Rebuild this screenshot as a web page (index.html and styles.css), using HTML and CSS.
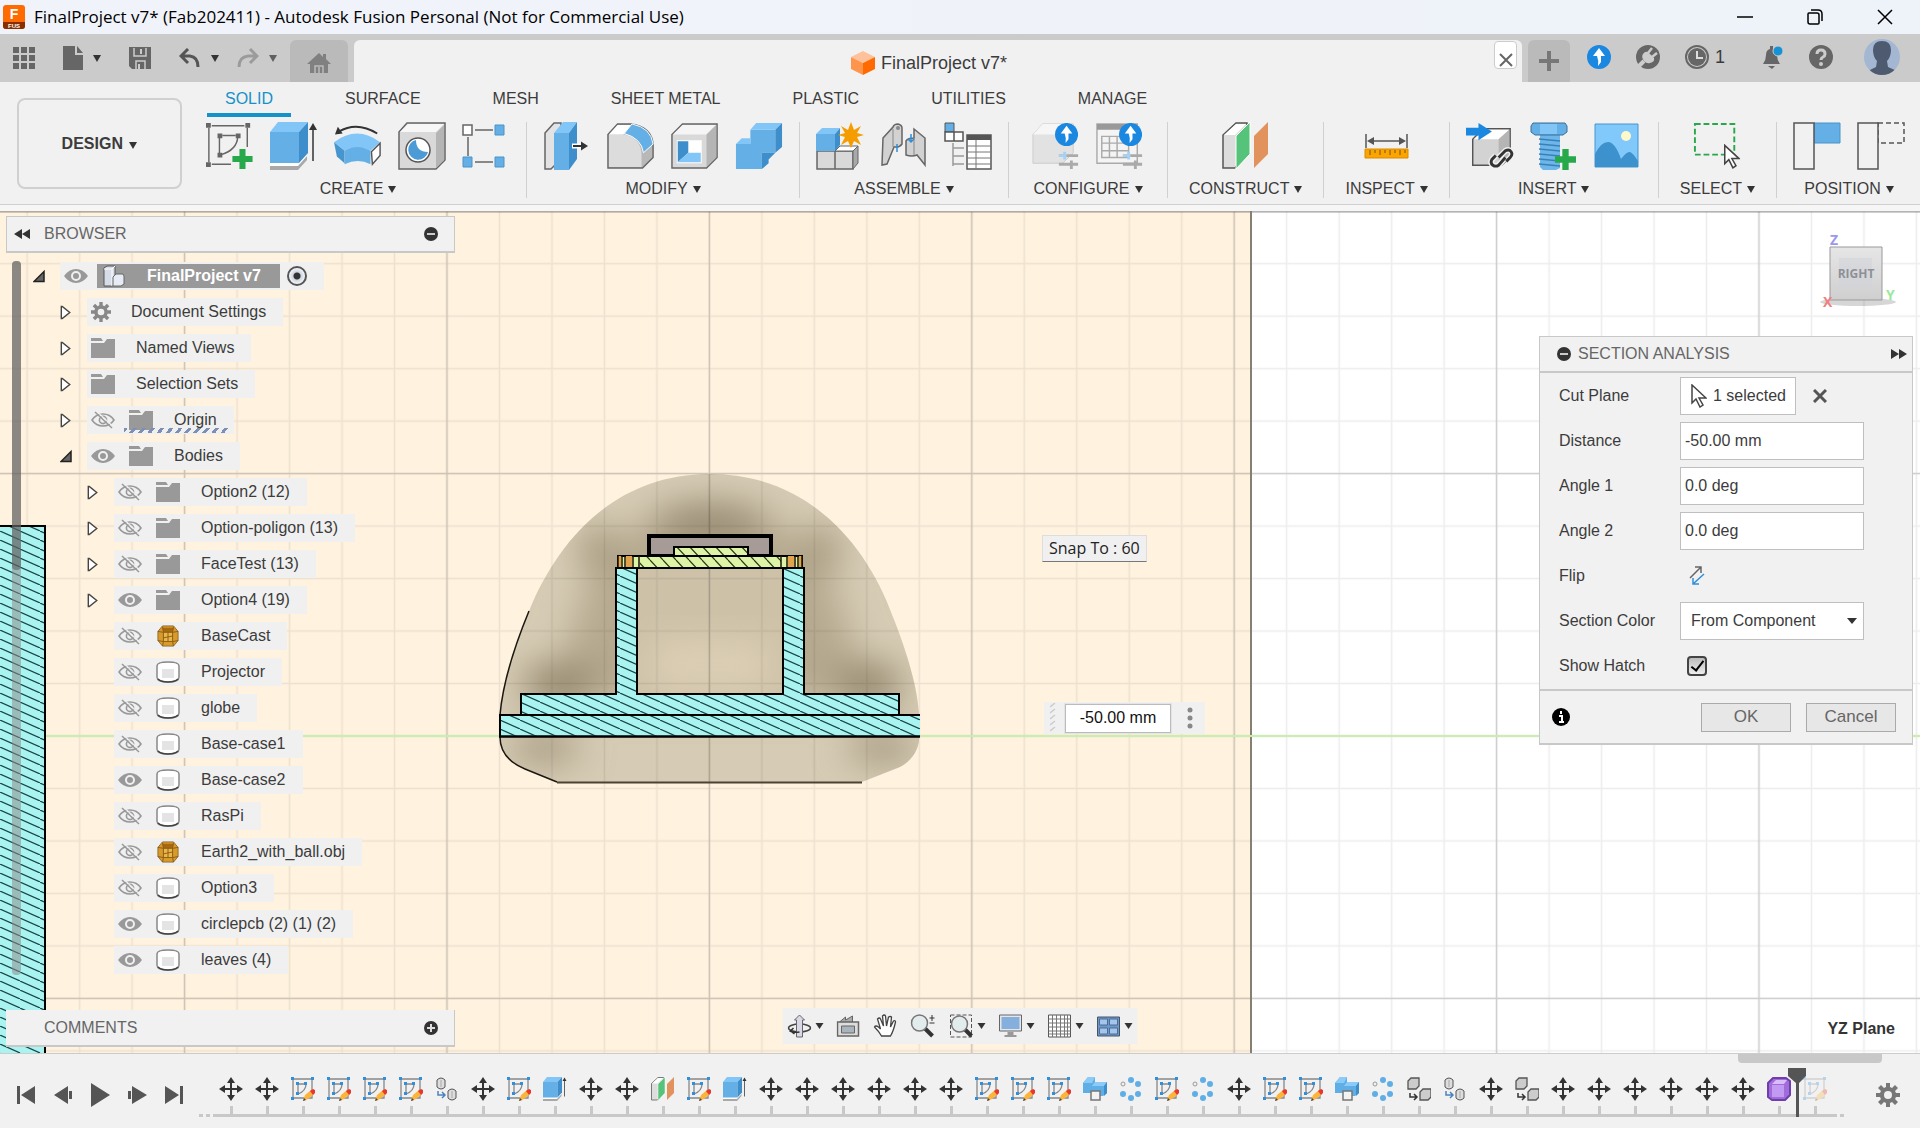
FILE: index.html
```html
<!doctype html>
<html lang="en">
  <head>
    <meta charset="utf-8">
    <title>FinalProject v7* (Fab202411) - Autodesk Fusion Personal</title>
    <link rel="stylesheet" href="styles.css">
  </head>
  <body>
    <!-- shared icons -->
    <svg class="defs" aria-hidden="true">
      <defs>
        <symbol id="eye" viewBox="0 0 24 18">
          <path d="M0 9Q5 2 12 2T24 9Q19 16 12 16T0 9z" fill="#999"/>
          <circle cx="12" cy="9" r="4" fill="#999" stroke="#f0f0f0" stroke-width="2"/>
        </symbol>
        <symbol id="eye-off" viewBox="0 0 24 18">
          <g fill="none" stroke="#999" stroke-width="1.6">
            <path d="M1 9Q5 3 12 3T23 9Q19 15 12 15T1 9z"/>
            <circle cx="12" cy="9" r="3.6"/>
            <path d="M4 1l17 16"/>
          </g>
          <path d="M5.500 0l17 16" stroke="#f0f0f0" stroke-width="1.200"/>
        </symbol>
        <symbol id="folder" viewBox="0 0 24 20">
          <path d="M0 0h10l2 3H0zM0 5h13l3-4h8v19H0z" fill="#999"/>
        </symbol>
        <symbol id="gear" viewBox="0 0 24 24">
          <path d="M10 0h4v4l2 1 3-3 3 3-3 3 1 2h4v4h-4l-1 2 3 3-3 3-3-3-2 1v4h-4v-4l-2-1-3 3-3-3 3-3-1-2H0v-4h4l1-2-3-3 3-3 3 3 2-1zM12 8a4 4 0 1 0 0 8 4 4 0 0 0 0-8z" fill="currentColor" fill-rule="evenodd"/>
        </symbol>
        <symbol id="solid" viewBox="0 0 24 22">
          <path d="M1 5Q1 1 12 1T23 5V16Q23 21 12 21T1 16z" fill="#fff" stroke="#888" stroke-width="1.500"/>
          <path d="M6 8h12v9H6z" fill="#e4e4e4"/>
          <path d="M2 4Q5 8 12 8T22 4Q20 2 12 2T2 4z" fill="#fff"/>
          <path d="M2 18q3 3 10 3t10-3" fill="none" stroke="#444" stroke-width="1.500"/>
        </symbol>
        <symbol id="mesh" viewBox="0 0 24 24">
          <path d="M6 1h12l5 6v10l-5 6H6l-5-6V7z" fill="#d79a2b" stroke="#8a6a35"/>
          <path d="M6 3h12l-1 5H7z" fill="#a8680f"/>
          <path d="M7 8h10v10H7z" fill="#e8b64a"/>
          <path d="M7 8L6 2M17 8l1-6M7 8L1 7M17 8l6-1M7 18l-1 5M17 18l1 5M7 18l-6-1M17 18l6-1M7 8h10v10H7zM7 14l10-2M12 8v10" fill="none" stroke="#8a5a10"/>
        </symbol>
        <symbol id="closed" viewBox="0 0 12 16">
          <path d="M1 1.500L2 1.500 10 8 2 14.500H1z" fill="#fff" stroke="#444" stroke-width="1.500"/>
        </symbol>
        <symbol id="open" viewBox="0 0 12 12">
          <path d="M11 1v10H1z" fill="#666" stroke="#222" stroke-width="1.500"/>
        </symbol>
        <symbol id="minus" viewBox="0 0 14 14">
          <circle cx="7" cy="7" r="7" fill="#333"/>
          <path d="M3 7h8" stroke="#ccc" stroke-width="2"/>
        </symbol>
        <symbol id="rewind" viewBox="0 0 16 10">
          <path d="M8 0v10L0 5zM16 0v10L8 5z" fill="#333"/>
        </symbol>

        <symbol id="cube-up" viewBox="0 0 24 24">
          <circle cx="12" cy="12" r="12" fill="#1a87e0"/>
          <path d="M12 3l6 8h-4v6l-3 4q1-5-1-10H6z" fill="#fff"/>
        </symbol>
        <symbol id="plus" viewBox="0 0 20 20">
          <path d="M7 0h6v7h7v6h-7v7H7v-7H0V7h7z" fill="#27a84a"/>
        </symbol>
        <symbol id="arrow-cursor" viewBox="0 0 16 24">
          <path d="M1 1v18l4-4 4 8 3-2-4-7h7z" fill="#fff" stroke="#444" stroke-width="1.500"/>
        </symbol>

        <symbol id="r-sketch" viewBox="0 0 50 48">
          <path d="M3 5v36M6 3h34M43 5v20M6 43h20M14 15v17M17 13h14M33 15q-1 13-17 18" fill="none" stroke="#666" stroke-width="1.500"/>
          <path d="M0 0h5v5H0zM41 0h5v5h-5zM0 41h5v5H0zM12 11h5v5h-5zM31 11h5v5h-5zM12 31h5v5h-5z" fill="#666"/>
          <use href="#plus" x="27" y="27" width="22" height="21"/>
        </symbol>
        <symbol id="extrude" viewBox="0 0 48 48">
          <path d="M0 42h28l9-9v5l-9 10H0z" fill="#a9a9a9"/>
          <path d="M0 40h28l9-9v3l-9 10H0z" fill="#fff"/>
          <path d="M0 10h29v31H0z" fill="#64afe5"/>
          <path d="M0 10L8 0h30l-9 10z" fill="#82c6f8"/>
          <path d="M29 10l9-10v31l-9 10z" fill="#3d8ecb"/>
          <path d="M43 39V6" stroke="#333" stroke-width="1.500"/>
          <path d="M43 1l4 7h-8z" fill="#333"/>
        </symbol>
        <symbol id="r-revolve" viewBox="0 0 50 48">
          <path d="M0 20Q24 2 48 20L38 29Q24 22 11 29z" fill="#82c6f8"/>
          <path d="M0 20l11 9v13L3 35z" fill="#4795cf"/>
          <path d="M11 29q13-8 27 0v14q-13-7-27 0z" fill="#64afe5"/>
          <path d="M39 30l9-9v13l-8 9z" fill="#fff" stroke="#555" stroke-width="1.500"/>
          <path d="M5 9Q24-2 45 11" fill="none" stroke="#333" stroke-width="2"/>
          <path d="M1 12L4 4l5 7z" fill="#333"/>
        </symbol>
        <symbol id="r-hole" viewBox="0 0 48 48">
          <path d="M1 10L9 1h38v37l-9 9H1z" fill="#d9d9d9" stroke="#666" stroke-width="1.500"/>
          <path d="M2 10l8-8h36l-8 8z" fill="#f7f7f7"/>
          <path d="M38 11l8-8v35l-8 8z" fill="#b5b5b5"/>
          <circle cx="20" cy="28" r="12" fill="#fff" stroke="#555" stroke-width="1.500"/>
          <path d="M18 18a10 10 0 1 0 12 12Q18 30 18 18z" fill="#4d9bd6"/>
        </symbol>
        <symbol id="r-pattern" viewBox="0 0 48 48">
          <path d="M13 8h18M6 15v19M13 40h18" stroke="#666" stroke-width="1.500"/>
          <path d="M1 3h9v10H1z" fill="#fff" stroke="#666" stroke-width="1.500"/>
          <path d="M33 3h9v10h-9zM1 35h9v10H1zM33 35h9v10h-9z" fill="#64afe5" stroke="#4b93c9"/>
        </symbol>
        <symbol id="r-press" viewBox="0 0 48 48">
          <path d="M2 11l9-10h7v36L8 47H2z" fill="#e3e3e3" stroke="#666" stroke-width="1.500"/>
          <path d="M11 11h15v37H11z" fill="#64afe5"/>
          <path d="M11 11L20 0h14l-8 11z" fill="#82c6f8"/>
          <path d="M26 11l8-11v37l-8 11z" fill="#3d8ecb"/>
          <path d="M29 24h10" stroke="#fff" stroke-width="5"/>
          <path d="M30 24h9" stroke="#333" stroke-width="2"/>
          <path d="M38 19.500l7 4.500-7 4.500z" fill="#333"/>
        </symbol>
        <symbol id="r-fillet" viewBox="0 0 50 48">
          <path d="M1 12L11 1h14q22 3 23 22v13L37 47H1z" fill="#b8b8b8" stroke="#666" stroke-width="1.500"/>
          <path d="M2 12h16q18 4 18 22v12H2z" fill="#dcdcdc"/>
          <path d="M2 12l9-10h14l-8 10z" fill="#fff"/>
          <path d="M18 11l8-10q20 4 22 21l-10 9Q36 16 18 11z" fill="#64afe5" stroke="#fff"/>
        </symbol>
        <symbol id="r-shell" viewBox="0 0 50 48">
          <path d="M1 12L12 1h36v35L37 47H1z" fill="#d9d9d9" stroke="#666" stroke-width="1.500"/>
          <path d="M2 12L12 2h35l-10 10z" fill="#f5f5f5"/>
          <path d="M37 12L47 2v34L37 46z" fill="#b5b5b5"/>
          <path d="M6 18h26v24H6z" fill="#fff"/>
          <path d="M7 19h11v12L7 41z" fill="#3d8ecb"/>
          <path d="M18 31h13v10H7z" fill="#82c6f8"/>
        </symbol>
        <symbol id="r-combine" viewBox="0 0 50 48">
          <path d="M1 22h15V7h26v24H28v17H1z" fill="#64afe5"/>
          <path d="M1 22l6-6h9v6zM16 7l6-7h27l-7 7z" fill="#82c6f8"/>
          <path d="M42 7l7-7v25l-7 6zM28 31h14l-7 7v4l-7 6z" fill="#3d8ecb"/>
        </symbol>
        <symbol id="r-newcomp" viewBox="0 0 48 48">
          <path d="M1 29h18V47H1zM19 29h18V47H19z" fill="#d9d9d9" stroke="#666" stroke-width="1.500"/>
          <path d="M19 29l5-5h18l-5 5z" fill="#fff" stroke="#666"/>
          <path d="M37 29l5-5v17l-5 6z" fill="#a9a9a9" stroke="#666"/>
          <path d="M0 12h19v17H0z" fill="#64afe5"/>
          <path d="M0 12l6-6h18l-5 6z" fill="#82c6f8"/>
          <path d="M19 12l5-6v17l-5 6z" fill="#3d8ecb"/>
          <path d="M35 0l3 8 7-4-4 7 7 2-7 2 4 8-7-4-3 7-3-7-7 4 4-8-7-2 7-2-4-7 7 4z" fill="#f59c00"/>
        </symbol>
        <symbol id="r-joint" viewBox="0 0 48 48">
          <path d="M3 16L13 5q1-3 5-3 4 1 4 4v16q-2 3-6 3h-2L7 42l-5 1z" fill="#d2d2d2" stroke="#666" stroke-width="1.500"/>
          <path d="M45 43L37 33q-5 2-11 0V19q2-3 8-3V7l11 9z" fill="#d2d2d2" stroke="#666" stroke-width="1.500"/>
          <path d="M13 7v18M34 17v16" stroke="#888"/>
          <circle cx="18" cy="6" r="2" fill="#888"/>
          <path d="M17 22v8M31 12v8M28 17l3 3 3-3" fill="none" stroke="#2f8fdb" stroke-width="1.500"/>
        </symbol>
        <symbol id="r-bom" viewBox="0 0 48 48">
          <path d="M1 1h9v9H1z" fill="#64afe5" stroke="#555"/>
          <path d="M1 10h9v9H1zM10 10h9v9h-9z" fill="#fff" stroke="#555" stroke-width="1.500"/>
          <path d="M9 21v23M9 26h11M9 34h11M9 42h11" fill="none" stroke="#999" stroke-width="1.500"/>
          <path d="M23 13h24v34H23z" fill="#fff" stroke="#555" stroke-width="1.500"/>
          <path d="M23 13h24v5H23z" fill="#555"/>
          <path d="M23 24h24M23 30h24M23 36h24M23 42h24M32 18v29" stroke="#777"/>
        </symbol>
        <symbol id="r-config" viewBox="0 0 50 48">
          <path d="M1 12L11 1h32v30L32 42H1z" fill="#e2e2e2" stroke="#ccc"/>
          <path d="M1 12L11 1h32L32 12z" fill="#f6f6f6"/>
          <path d="M28 34h20M28 43h20M41 39v9" stroke="#aaa" stroke-width="3"/>
          <path d="M34 30v8M28 34h8" stroke="#a5d2f4" stroke-width="3"/>
          <use href="#cube-up" x="24" y="0" width="24" height="24"/>
        </symbol>
        <symbol id="r-cfgtable" viewBox="0 0 50 48">
          <path d="M1 1h42v41H1z" fill="#f4f4f4" stroke="#aaa" stroke-width="1.500"/>
          <path d="M1 1h42v6H1z" fill="#999"/>
          <path d="M6 14h28v22H6zM6 21h28M6 29h28M14 14v22M22 14v22" fill="none" stroke="#aaa" stroke-width="1.500"/>
          <path d="M28 34h20M28 43h20M41 39v9" stroke="#aaa" stroke-width="3"/>
          <path d="M34 30v8M28 34h8" stroke="#a5d2f4" stroke-width="3"/>
          <use href="#cube-up" x="24" y="0" width="24" height="24"/>
        </symbol>
        <symbol id="plane" viewBox="0 0 48 48">
          <path d="M1 13L14 1h11v30L13 46H1z" fill="#ddd" stroke="#555" stroke-width="1.500"/>
          <path d="M2 13L14 2h10L13 13z" fill="#fff"/>
          <path d="M14 14L28 0v32L14 47z" fill="#56c37a" stroke="#fff"/>
          <path d="M32 14L46 0v32L32 46z" fill="#e2935d"/>
        </symbol>
        <symbol id="r-measure" viewBox="0 0 48 48">
          <path d="M3 12v14M44 12v14M6 19h35" stroke="#555" stroke-width="1.500"/>
          <path d="M4 19l7-4v8zM43 19l-7-4v8z" fill="#555"/>
          <path d="M2 27h43v9H2z" fill="#fca500" stroke="#d98b00"/>
          <path d="M7 28v5M12 28v3M17 28v5M22 28v3M27 28v5M32 28v3M37 28v5M42 28v3" stroke="#765000"/>
        </symbol>
        <symbol id="r-insert" viewBox="0 0 50 48">
          <path d="M7 17L18 6h28v30L37 44H7z" fill="#d3d3d3" stroke="#555" stroke-width="1.500"/>
          <path d="M8 17L19 7h26L34 17z" fill="#fff"/>
          <path d="M34 17L45 7v29l-11 7z" fill="#b5b5b5"/>
          <path d="M0 5h13V0l14 9-14 9v-5H0z" fill="#1a87e0"/>
          <g fill="none" stroke="#f1f1f1" stroke-width="6"><path d="M34 36l7-7q4-2 6 1t-1 6l-4 4M41 36l-7 8q-3 2-6 0t-1-6l4-4"/></g>
          <g fill="none" stroke="#333" stroke-width="3"><path d="M34 36l7-7q4-2 6 1t-1 6l-4 4M41 36l-7 8q-3 2-6 0t-1-6l4-4"/></g>
        </symbol>
        <symbol id="r-bolt" viewBox="0 0 48 48">
          <path d="M10 12h20v34l-4 2H13l-3-3z" fill="#6db6ea"/>
          <path d="M3 1h32l2 3v6l-4 3H5l-4-3V4z" fill="#64afe5" stroke="#3a6f9a"/>
          <path d="M10 2v10h17V2" fill="#82c6f8"/>
          <path d="M9 17l21 2M9 22l21 2M9 27l21 2M9 32l21 2M9 37l21 2M9 42l21 2" stroke="#3a80b8" stroke-width="1.500"/>
          <use href="#plus" x="25" y="27" width="21" height="21"/>
        </symbol>
        <symbol id="r-image" viewBox="0 0 48 48">
          <path d="M1 2h43v43H1z" fill="#80c9fa" stroke="#4795cf"/>
          <circle cx="32" cy="14" r="5" fill="#fff8cc"/>
          <path d="M1 32q6-12 13-12t13 17q6-8 9-7t8 9v6H1z" fill="#3d92cd"/>
        </symbol>
        <symbol id="r-select" viewBox="0 0 50 48">
          <path d="M2 1h41v32H2z" fill="none" stroke="#27a84a" stroke-width="2" stroke-dasharray="6 3"/>
          <use href="#arrow-cursor" x="32" y="22" width="17" height="26"/>
        </symbol>
        <symbol id="r-pos1" viewBox="0 0 48 48">
          <path d="M21 1h26v20H21z" fill="#64afe5" stroke="#4b93c9"/>
          <path d="M1 1h20v46H1z" fill="#f1f1f1" stroke="#555" stroke-width="1.500"/>
        </symbol>
        <symbol id="r-pos2" viewBox="0 0 48 48">
          <path d="M21 1h26v20H21z" fill="none" stroke="#555" stroke-width="1.500" stroke-dasharray="5 3"/>
          <path d="M1 1h20v46H1z" fill="#f1f1f1" stroke="#555" stroke-width="1.500"/>
        </symbol>

        <symbol id="move" viewBox="0 0 24 24">
          <path d="M12 3v18M3 12h18" stroke="#333" stroke-width="2"/>
          <path d="M12 0l4 6H8zM12 24l4-6H8zM0 12l6-4v8zM24 12l-6-4v8z" fill="#333"/>
        </symbol>
        <symbol id="sketch" viewBox="0 0 24 24">
          <path d="M2 2h19v19H2zM7 7h8Q15 14 7 17z" fill="none" stroke="#888" stroke-width="1.300"/>
          <path d="M0 0h3v3H0zM20 0h3v3h-3zM0 20h3v3H0zM5 5h3v3H5zM13 5h3v3h-3zM5 15h3v3H5z" fill="#2f8fdb"/>
          <path d="M12 24l2-6 6-5 3 4-6 5z" fill="#fbb53c"/>
          <path d="M19 14l3-2 2 1v3l-2 2z" fill="#e8382c"/>
          <path d="M12 24l1-3 2 2z" fill="#444"/>
        </symbol>
        <symbol id="copy" viewBox="0 0 24 24">
          <g fill="#ddd" stroke="#555">
            <path d="M2 3q4-4 8 0v7q-4 4-8 0zM13 14q4-4 8 0v7q-4 4-8 0z"/>
          </g>
          <path d="M6 3v7M17 14v7" stroke="#aaa"/>
          <path d="M3 14v4h6M7 15l3 3-3 3" fill="none" stroke="#4c83bd" stroke-width="1.500"/>
        </symbol>
        <symbol id="component" viewBox="0 0 24 24">
          <path d="M1 4l3-3h8v8l-3 3H1zM13 15l3-3h8v8l-3 3h-8z" fill="#ccc" stroke="#555" stroke-width="1.300"/>
          <path d="M3 16v4h6M7 17l3 3-3 3" fill="none" stroke="#333" stroke-width="1.500"/>
        </symbol>
        <symbol id="combine" viewBox="0 0 24 24">
          <path d="M0 6l5-6h7v5h12v11l-4 3H9v-3H0z" fill="#5faee6"/>
          <path d="M0 6l5-6h7l-3 6zM9 9l3-4h12l-3 4z" fill="#8ccbf7"/>
          <path d="M21 9l3-4v11l-3 3z" fill="#3d8ecb"/>
          <path d="M8 14h9v9H8z" fill="#f3f3f3" stroke="#777" stroke-width="1.500"/>
        </symbol>
        <symbol id="circular" viewBox="0 0 24 24">
          <g fill="#5faee6"><circle cx="12" cy="3" r="3"/><circle cx="19" cy="7" r="3"/><circle cx="19" cy="17" r="3"/><circle cx="12" cy="21" r="3"/><circle cx="4" cy="17" r="3"/></g>
          <circle cx="4" cy="7" r="2" fill="#f1f1f1" stroke="#999"/>
        </symbol>
        <symbol id="form" viewBox="0 0 24 24">
          <path d="M6 1h13l4 3v14l-5 5H5l-4-3V6z" fill="#a06cdb" stroke="#6f3ea8" stroke-linejoin="round" stroke-width="2"/>
          <path d="M5 8h12v12H5z" fill="#c39af2"/>
          <path d="M5 7l4-4h11l-3 4z" fill="#d9bcf8"/>
        </symbol>
      </defs>
    </svg>

    <header class="titlebar">
      <svg class="app-logo" width="22" height="24" viewBox="0 0 22 24">
        <rect width="22" height="24" rx="3" fill="#ff6b00"/>
        <path d="M0 17h22v4q0 3-3 3H3q-3 0-3-3z" fill="#8a2e00"/>
        <text x="11" y="14" class="logo-f">F</text>
        <text x="11" y="23" class="logo-fus">FUS</text>
      </svg>
      <h1>FinalProject v7* (Fab202411) - Autodesk Fusion Personal (Not for Commercial Use)</h1>
      <div class="window-buttons">
        <button aria-label="Minimize"><svg width="16" height="16"><path d="M0 8h16" stroke="#000" stroke-width="1.500"/></svg></button>
        <button aria-label="Restore"><svg width="16" height="16"><path d="M1 5q0-1 1-1h8q2 0 2 2v8q0 1-1 1H3q-2 0-2-2zM4 1h7q4 0 4 4v7" fill="none" stroke="#000" stroke-width="1.500"/></svg></button>
        <button aria-label="Close"><svg width="16" height="16"><path d="M1 1l14 14M15 1L1 15" stroke="#000" stroke-width="1.500"/></svg></button>
      </div>
    </header>

    <div class="tabbar">
      <div class="quick">
        <button aria-label="Data panel"><svg width="22" height="22"><path d="M0 0h6v6H0zM8 0h6v6H8zM16 0h6v6h-6zM0 8h6v6H0zM8 8h6v6H8zM16 8h6v6h-6zM0 16h6v6H0zM8 16h6v6H8zM16 16h6v6h-6z" fill="#666"/></svg></button>
        <button class="file" aria-label="File"><svg width="20" height="24"><path d="M0 0h12v9h8v15H0zM14 0l6 7h-6z" fill="#666"/></svg><i class="caret"></i></button>
        <button aria-label="Save"><svg width="22" height="22"><path d="M0 0h22v22H3l-3-3z" fill="#666"/><path d="M5 1v8h12V1M7 22v-8h9v8" fill="none" stroke="#ccc" stroke-width="1.500"/><path d="M12 2v5M10 17v5" stroke="#ccc" stroke-width="2"/></svg></button>
        <button class="undo" aria-label="Undo"><svg width="22" height="20"><path d="M2 8h9q8 1 8 11M9 1L2 8l7 7" fill="none" stroke="#555" stroke-width="3"/></svg><i class="caret"></i></button>
        <button class="redo" aria-label="Redo"><svg width="22" height="20"><path d="M20 8h-9Q2 9 2 19M13 1l7 7-7 7" fill="none" stroke="#888" stroke-width="3"/></svg><i class="caret"></i></button>
      </div>
      <button class="tab home" aria-label="Home"><svg width="24" height="20" viewBox="0 0 24 20"><path d="M12 0l4 4V1h3v5l5 5h-3v9H3v-9H0z" fill="#808080"/><path d="M8 20v-7h8v7M12 14v6" fill="none" stroke="#bababa" stroke-width="1.500"/></svg></button>
      <div class="tab doc">
        <svg width="24" height="24" viewBox="0 0 24 24"><path d="M12 0l12 6-12 6L0 6z" fill="#ffc19a"/><path d="M0 6l12 6v12L0 18z" fill="#ff954d"/><path d="M24 6l-12 6v12l12-6z" fill="#ff6b00"/></svg>
        <span>FinalProject v7*</span>
        <button class="tab-close" aria-label="Close tab"><svg width="14" height="14"><path d="M1 1l12 12M13 1L1 13" stroke="#666" stroke-width="2"/></svg></button>
      </div>
      <button class="tab add" aria-label="New tab"><svg width="20" height="20"><path d="M10 0v20M0 10h20" stroke="#777" stroke-width="4"/></svg></button>
      <div class="status">
        <svg width="24" height="24"><use href="#cube-up"/></svg>
        <svg width="24" height="24"><circle cx="12" cy="12" r="12" fill="#666"/><path d="M3 21l5-5" stroke="#ccc" stroke-width="4"/><path d="M7 9q2-3 5-2l6 6q1 4-4 5-3 1-6-2-3-4-1-7z" fill="#ccc"/><path d="M12 8l4-5M16 12l5-4" stroke="#ccc" stroke-width="2.500"/></svg>
        <span class="jobs"><svg width="24" height="24"><circle cx="12" cy="12" r="11" fill="none" stroke="#666" stroke-width="2"/><circle cx="12" cy="12" r="9" fill="#666"/><path d="M12 6v7h6" fill="none" stroke="#ddd" stroke-width="2"/></svg>1</span>
        <svg width="24" height="24"><path d="M3 19q3-4 3-9 0-5 4-6V1h3v3q4 1 4 6 0 5 3 9z" fill="#666"/><path d="M8 21h7l-3 3z" fill="#666"/><circle cx="18" cy="6" r="5" fill="#1592d6" stroke="#ccc"/></svg>
        <svg width="24" height="24"><circle cx="12" cy="12" r="12" fill="#666"/><path d="M8 9q0-4 4-4t4 4q0 2-2 3t-2 3" fill="none" stroke="#ccc" stroke-width="3"/><circle cx="12" cy="19" r="2" fill="#ccc"/></svg>
        <svg class="avatar" width="36" height="36" viewBox="0 0 36 36"><defs><clipPath id="round"><circle cx="18" cy="18" r="18"/></clipPath></defs><g clip-path="url(#round)"><path d="M0 0h36v36H0z" fill="#a3b6d2"/><path d="M18 2q9 0 9 9 0 7-4 11l1 6 9 4v4H4v-4l8-4 1-6q-4-4-4-11 0-9 9-9z" fill="#4d5a70"/></g></svg>
      </div>
    </div>

    <div class="ribbon">
      <button class="workspace">DESIGN <i class="caret"></i></button>
      <div class="ribbon-main">
        <nav class="ribbon-tabs">
          <a href="#" class="active">SOLID</a>
          <a href="#">SURFACE</a>
          <a href="#">MESH</a>
          <a href="#">SHEET METAL</a>
          <a href="#">PLASTIC</a>
          <a href="#">UTILITIES</a>
          <a href="#">MANAGE</a>
        </nav>
        <div class="groups">
          <section class="group">
            <div class="tools">
              <svg><use href="#r-sketch"/></svg>
              <svg><use href="#extrude"/></svg>
              <svg><use href="#r-revolve"/></svg>
              <svg><use href="#r-hole"/></svg>
              <svg><use href="#r-pattern"/></svg>
            </div>
            <button>CREATE <i class="caret"></i></button>
          </section>
          <section class="group">
            <div class="tools">
              <svg><use href="#r-press"/></svg>
              <svg><use href="#r-fillet"/></svg>
              <svg><use href="#r-shell"/></svg>
              <svg><use href="#r-combine"/></svg>
            </div>
            <button>MODIFY <i class="caret"></i></button>
          </section>
          <section class="group">
            <div class="tools">
              <svg><use href="#r-newcomp"/></svg>
              <svg><use href="#r-joint"/></svg>
              <svg><use href="#r-bom"/></svg>
            </div>
            <button>ASSEMBLE <i class="caret"></i></button>
          </section>
          <section class="group configure">
            <div class="tools">
              <svg><use href="#r-config"/></svg>
              <svg><use href="#r-cfgtable"/></svg>
            </div>
            <button>CONFIGURE <i class="caret"></i></button>
          </section>
          <section class="group wide">
            <div class="tools"><svg><use href="#plane"/></svg></div>
            <button>CONSTRUCT <i class="caret"></i></button>
          </section>
          <section class="group wide">
            <div class="tools"><svg><use href="#r-measure"/></svg></div>
            <button>INSPECT <i class="caret"></i></button>
          </section>
          <section class="group">
            <div class="tools">
              <svg><use href="#r-insert"/></svg>
              <svg><use href="#r-bolt"/></svg>
              <svg><use href="#r-image"/></svg>
            </div>
            <button>INSERT <i class="caret"></i></button>
          </section>
          <section class="group wide">
            <div class="tools"><svg><use href="#r-select"/></svg></div>
            <button>SELECT <i class="caret"></i></button>
          </section>
          <section class="group">
            <div class="tools">
              <svg><use href="#r-pos1"/></svg>
              <svg><use href="#r-pos2"/></svg>
            </div>
            <button>POSITION <i class="caret"></i></button>
          </section>
        </div>
      </div>
    </div>

    <main class="viewport">
      <!-- modelling canvas: work plane, grid and the sectioned bodies -->
      <svg class="scene">
        <defs>
          <pattern id="minor" patternUnits="userSpaceOnUse" x="683.160" y="709.760" width="52.480" height="52.480">
            <path d="M26.240 0v52.480M0 26.240h52.480" stroke="#000" stroke-opacity=".07" stroke-width="1.500"/>
          </pattern>
          <pattern id="major" patternUnits="userSpaceOnUse" x="578.200" y="604.800" width="262.400" height="262.400">
            <path d="M131.200 0v262.400M0 131.200h262.400" stroke="#000" stroke-opacity=".14" stroke-width="1.500"/>
          </pattern>
          <pattern id="hatch" patternUnits="userSpaceOnUse" width="20" height="9">
            <path d="M-20 0L0 9M0 0L20 9M20 0L40 9" stroke="#174747" stroke-width="1.200"/>
          </pattern>
          <pattern id="hatch-green" patternUnits="userSpaceOnUse" width="13" height="14">
            <path d="M-13 0L0 14M0 0L13 14M13 0L26 14" stroke="#2c3a18" stroke-width="1.200"/>
          </pattern>
          <clipPath id="dome">
            <path d="M500 737V715C503 680 515 645 529 611C558 540 615 474 710 474C805 474 865 540 893 617C908 655 918 690 919 715V740C918 752 910 762 900 767L862 782H557L525 769C508 762 500 752 500 737z"/>
          </clipPath>
          <filter id="soft" x="-50%" y="-50%" width="200%" height="200%"><feGaussianBlur stdDeviation="18"/></filter>
          <linearGradient id="cube-face" x2="0" y2="1"><stop stop-color="#e6e6e6"/><stop offset="1" stop-color="#cfcfcf"/></linearGradient>
        </defs>
        <g transform="translate(0 -205)">
          <rect y="205" width="100%" height="100%" fill="#fff"/>
          <rect y="211" width="1251" height="900" fill="#fff2df"/>
          <g clip-path="url(#dome)">
            <path d="M480 460h460v340H480z" fill="#d6cbb4"/>
            <g filter="url(#soft)">
              <path d="M560 700Q570 530 710 500Q850 530 860 700z" fill="#b5a98f"/>
              <ellipse cx="710" cy="522" rx="60" ry="16" fill="#8d8168"/>
              <ellipse cx="600" cy="550" rx="20" ry="24" fill="#a3977c"/>
              <ellipse cx="820" cy="550" rx="20" ry="24" fill="#a3977c"/>
              <ellipse cx="560" cy="685" rx="38" ry="22" fill="#91856b"/>
              <ellipse cx="868" cy="685" rx="34" ry="22" fill="#91856b"/>
              <ellipse cx="545" cy="748" rx="34" ry="14" fill="#9c9077"/>
              <ellipse cx="882" cy="748" rx="34" ry="14" fill="#9c9077"/>
            </g>
            <path d="M637 568h146v126H637z" fill="#cdc1a8"/>
            <path d="M650 640h120v50H650z" fill="#dccfb5" filter="url(#soft)"/>
          </g>
          <rect y="205" width="100%" height="100%" fill="url(#minor)"/>
          <rect y="205" width="100%" height="100%" fill="url(#major)"/>
          <rect y="205" width="100%" height="6" fill="#f6f6f6"/>
          <path d="M0 212h4000" stroke="#000" stroke-opacity=".16" stroke-width="2"/>
          <path d="M1251 211v900" stroke="#857f74" stroke-width="2"/>
          <path d="M0 736h4000" stroke="#c8efae" stroke-width="2"/>

          <path d="M529 611C515 645 503 680 500 715V737C500 752 508 762 525 769L557 782" fill="none" stroke="#1c1810" stroke-width="1.500"/>
          <path d="M557 782.500h305" stroke="#4c4233" stroke-width="2"/>

          <!-- housing and pcb -->
          <path d="M649 556V536h122v20z" fill="#a79b98" stroke="#000" stroke-width="4"/>
          <path d="M674 547h74v9h-74z" fill="#ddf4a6"/>
          <path d="M674 547h74v9h-74z" fill="url(#hatch-green)" stroke="#000" stroke-width="2"/>
          <path d="M618 556h184v12H618z" fill="#ddf4a6"/>
          <path d="M640 556h141v12H640z" fill="url(#hatch-green)"/>
          <path d="M618 556h184v12H618z" fill="none" stroke="#000" stroke-width="2"/>
          <path d="M618 556h3v12h-3zM626 556h6v12h-6zM788 556h6v12h-6zM799 556h3v12h-3z" fill="#e2a34d"/>
          <path d="M618 556v12M622 556v12M625 556v12M633 556v12M639 556v12M781 556v12M787 556v12M795 556v12M798 556v12M802 556v12" stroke="#1d1608" stroke-width="1.500"/>

          <!-- base plates -->
          <g stroke="#000" stroke-width="2">
            <path d="M521 715V694H616V568H637V694H783V568H804V694H899V715z" fill="#a9f3f0"/>
            <path d="M521 715V694H616V568H637V694H783V568H804V694H899V715z" fill="url(#hatch)"/>
            <path d="M920 715H500V736.500H920" fill="#a9f3f0"/>
            <path d="M920 715H500V736.500H920" fill="url(#hatch)"/>
            <path d="M-4 526H45V1120H-4z" fill="#a9f3f0"/>
            <path d="M-4 526H45V1120H-4z" fill="url(#hatch)"/>
          </g>
        </g>
      </svg>

      <aside class="browser">
        <div class="panel-head">
          <svg width="16" height="10"><use href="#rewind"/></svg>
          <h2>BROWSER</h2>
          <svg width="14" height="14"><use href="#minus"/></svg>
        </div>
        <div class="tree-wrap">
          <div class="tree-scroll"><span></span></div>
          <ul class="tree">
            <li>
              <svg class="tw"><use href="#open"/></svg>
              <div class="node root">
                <svg class="eye"><use href="#eye"/></svg>
                <b><svg width="22" height="22" viewBox="0 0 22 22"><path d="M1 3l3-2h8v11l-2 9H1z" fill="#d6dce8" stroke="#555"/><path d="M1 4h8v17M9 4l3-3" fill="none" stroke="#fff"/><path d="M10 12l3-3h7l1 2v8l-3 2h-8z" fill="#e6ebf5" stroke="#666"/></svg>FinalProject v7</b>
                <input type="radio" checked aria-label="Activate FinalProject v7">
              </div>
            </li>
            <li class="l1"><svg class="tw"><use href="#closed"/></svg><div class="node"><svg class="gear"><use href="#gear"/></svg>Document Settings</div></li>
            <li class="l1"><svg class="tw"><use href="#closed"/></svg><div class="node"><svg class="kind"><use href="#folder"/></svg>Named Views</div></li>
            <li class="l1"><svg class="tw"><use href="#closed"/></svg><div class="node"><svg class="kind"><use href="#folder"/></svg>Selection Sets</div></li>
            <li class="l1"><svg class="tw"><use href="#closed"/></svg><div class="node origin"><svg class="eye"><use href="#eye-off"/></svg><svg class="kind"><use href="#folder"/></svg>Origin</div></li>
            <li class="l1"><svg class="tw"><use href="#open"/></svg><div class="node"><svg class="eye"><use href="#eye"/></svg><svg class="kind"><use href="#folder"/></svg>Bodies</div></li>
            <li class="l2"><svg class="tw"><use href="#closed"/></svg><div class="node"><svg class="eye"><use href="#eye-off"/></svg><svg class="kind"><use href="#folder"/></svg>Option2 (12)</div></li>
            <li class="l2"><svg class="tw"><use href="#closed"/></svg><div class="node"><svg class="eye"><use href="#eye-off"/></svg><svg class="kind"><use href="#folder"/></svg>Option-poligon (13)</div></li>
            <li class="l2"><svg class="tw"><use href="#closed"/></svg><div class="node"><svg class="eye"><use href="#eye-off"/></svg><svg class="kind"><use href="#folder"/></svg>FaceTest (13)</div></li>
            <li class="l2"><svg class="tw"><use href="#closed"/></svg><div class="node"><svg class="eye"><use href="#eye"/></svg><svg class="kind"><use href="#folder"/></svg>Option4 (19)</div></li>
            <li class="l2 leaf"><div class="node"><svg class="eye"><use href="#eye-off"/></svg><svg class="kind"><use href="#mesh"/></svg>BaseCast</div></li>
            <li class="l2 leaf"><div class="node"><svg class="eye"><use href="#eye-off"/></svg><svg class="kind"><use href="#solid"/></svg>Projector</div></li>
            <li class="l2 leaf"><div class="node"><svg class="eye"><use href="#eye-off"/></svg><svg class="kind"><use href="#solid"/></svg>globe</div></li>
            <li class="l2 leaf"><div class="node"><svg class="eye"><use href="#eye-off"/></svg><svg class="kind"><use href="#solid"/></svg>Base-case1</div></li>
            <li class="l2 leaf"><div class="node"><svg class="eye"><use href="#eye"/></svg><svg class="kind"><use href="#solid"/></svg>Base-case2</div></li>
            <li class="l2 leaf"><div class="node"><svg class="eye"><use href="#eye-off"/></svg><svg class="kind"><use href="#solid"/></svg>RasPi</div></li>
            <li class="l2 leaf"><div class="node"><svg class="eye"><use href="#eye-off"/></svg><svg class="kind"><use href="#mesh"/></svg>Earth2_with_ball.obj</div></li>
            <li class="l2 leaf"><div class="node"><svg class="eye"><use href="#eye-off"/></svg><svg class="kind"><use href="#solid"/></svg>Option3</div></li>
            <li class="l2 leaf"><div class="node"><svg class="eye"><use href="#eye"/></svg><svg class="kind"><use href="#solid"/></svg>circlepcb (2) (1) (2)</div></li>
            <li class="l2 leaf"><div class="node"><svg class="eye"><use href="#eye"/></svg><svg class="kind"><use href="#solid"/></svg>leaves (4)</div></li>
          </ul>
        </div>
        <div class="panel-head comments">
          <h2>COMMENTS</h2>
          <svg width="14" height="14"><circle cx="7" cy="7" r="7" fill="#333"/><path d="M3 7h8M7 3v8" stroke="#ddd" stroke-width="2"/></svg>
        </div>
      </aside>

      <div class="snap">Snap To : 60</div>
      <div class="manip">
        <svg width="6" height="30"><path d="M0 4l5-4M0 10l5-4M0 16l5-4M0 22l5-4M0 28l5-4" stroke="#ccc" stroke-width="1.500"/></svg>
        <input type="text" value="-50.00 mm" aria-label="Offset">
        <svg width="6" height="22"><g fill="#888"><circle cx="3" cy="3" r="2.500"/><circle cx="3" cy="11" r="2.500"/><circle cx="3" cy="19" r="2.500"/></g></svg>
      </div>

      <svg class="viewcube" width="80" height="80" viewBox="0 0 80 80">
        <ellipse cx="42" cy="70" rx="38" ry="4" fill="#000" opacity=".16"/>
        <path d="M14 15h52v53H14z" fill="url(#cube-face)" stroke="#999"/>
        <path d="M23 26h33v31H23z" fill="#d2d4d8" opacity=".6"/>
        <text x="40" y="46" class="face">RIGHT</text>
        <text x="14" y="13" class="axis z">Z</text>
        <text x="7" y="75" class="axis x">X</text>
        <text x="70" y="68" class="axis y">Y</text>
      </svg>

      <form class="section-panel">
        <div class="section-head">
          <svg width="14" height="14"><use href="#minus"/></svg>
          <h2>SECTION ANALYSIS</h2>
          <svg width="16" height="10" viewBox="0 0 16 10"><path d="M0 0v10l8-5zM8 0v10l8-5z" fill="#333"/></svg>
        </div>
        <div class="fields">
          <label for="cut">Cut Plane</label>
          <div class="cut">
            <button type="button" id="cut"><svg width="16" height="24"><use href="#arrow-cursor"/></svg>1 selected</button>
            <button type="button" class="clear" aria-label="Clear selection"><svg width="14" height="14"><path d="M1 1l12 12M13 1L1 13" stroke="#555" stroke-width="3"/></svg></button>
          </div>
          <label for="distance">Distance</label>
          <input type="text" id="distance" value="-50.00 mm">
          <label for="angle1">Angle 1</label>
          <input type="text" id="angle1" value="0.0 deg">
          <label for="angle2">Angle 2</label>
          <input type="text" id="angle2" value="0.0 deg">
          <label for="flip">Flip</label>
          <button type="button" id="flip" class="flip"><svg width="16" height="20"><path d="M1 12L12 1M6 1h6v6" fill="none" stroke="#666" stroke-width="1.500"/><path d="M15 8L4 18M4 12v6h6" fill="none" stroke="#2f8fdb" stroke-width="1.500"/></svg></button>
          <label for="color">Section Color</label>
          <div class="select"><select id="color"><option>From Component</option></select></div>
          <label for="showhatch">Show Hatch</label>
          <input type="checkbox" id="showhatch" checked>
        </div>
        <div class="section-foot">
          <svg width="18" height="18"><circle cx="9" cy="9" r="9" fill="#000"/><path d="M9 3v3M7 8h3v6M7 14h5" fill="none" stroke="#fff" stroke-width="2"/></svg>
          <button type="button">OK</button>
          <button type="button">Cancel</button>
        </div>
      </form>

      <div class="navbar">
        <button aria-label="Orbit"><svg width="24" height="24"><ellipse cx="12" cy="14" rx="11" ry="4" fill="none" stroke="#444" stroke-width="1.500"/><path d="M9 23V6H7l5-5 5 5h-2v17z" fill="#d8d8e6" stroke="#666"/><path d="M2 17q5 2 10 1M6 14l-3 3 4 3" fill="none" stroke="#333" stroke-width="1.500"/></svg><i class="caret"></i></button>
        <button aria-label="Look at"><svg width="24" height="24"><path d="M3 8l6-5v3l7-4v6" fill="#aaa" stroke="#666"/><path d="M1 8h21v14H1z" fill="#ddd" stroke="#666" stroke-width="1.500"/><path d="M5 12h13v7H5z" fill="#a9b4bd" stroke="#666"/></svg></button>
        <button aria-label="Pan"><svg width="24" height="24"><path d="M8 22q-2-4-7-9 1-2 4 0l2 2-3-10q2-2 3 0l3 7-1-10q2-2 3 0l1 10 2-9q2-1 3 0l-1 10 3-6q2-1 2 1-2 9-5 14z" fill="#fff" stroke="#444" stroke-width="1.300"/></svg></button>
        <button aria-label="Zoom"><svg width="26" height="24"><path d="M14 14l8 8" stroke="#333" stroke-width="4"/><circle cx="9" cy="9" r="8" fill="#e2ecec" stroke="#777" stroke-width="1.500"/><path d="M19 4h5M21.500 1v6M19 9h5" stroke="#333"/></svg></button>
        <button aria-label="Fit"><svg width="24" height="24"><path d="M1 1h21v22H1z" fill="none" stroke="#555" stroke-dasharray="4 2"/><path d="M15 15l7 7" stroke="#333" stroke-width="4"/><circle cx="10" cy="10" r="8" fill="#e2ecec" stroke="#777" stroke-width="1.500"/></svg><i class="caret"></i></button>
        <button aria-label="Display settings"><svg width="24" height="24"><path d="M1 1h22v16H1z" fill="#e4e6ea" stroke="#666"/><path d="M3 3h18v12H3z" fill="#85afdc"/><path d="M9 18h6v3h3v2H6v-2h3z" fill="#999"/></svg><i class="caret"></i></button>
        <button aria-label="Grid and snaps"><svg width="24" height="24"><path d="M1 1h22v22H1z" fill="#fff" stroke="#555"/><path d="M5 1v22M9 1v22M13 1v22M17 1v22M20 1v22M1 5h22M1 9h22M1 13h22M1 17h22M1 20h22" stroke="#777"/></svg><i class="caret"></i></button>
        <button aria-label="Viewports"><svg width="24" height="24"><path d="M1 3h22v19H1z" fill="#6f97c6" stroke="#456"/><path d="M3 5h8v6H3zM13 5h8v6h-8zM3 14h8v6H3zM13 14h8v6h-8z" fill="#a5c5ea" stroke="#4a6d99"/></svg><i class="caret"></i></button>
      </div>
      <div class="plane-name">YZ Plane</div>
    </main>

    <footer class="timeline">
      <div class="scroll-thumb"></div>
      <div class="playback">
        <button aria-label="First"><svg width="20" height="24"><path d="M0 3h3v18H0zM18 3v18L4 12z" fill="#555"/></svg></button>
        <button aria-label="Previous"><svg width="20" height="24"><path d="M14 3v18L0 12zM15 8h3v8h-3z" fill="#555"/></svg></button>
        <button aria-label="Play"><svg width="20" height="24"><path d="M0 0l19 12L0 24z" fill="#555"/></svg></button>
        <button aria-label="Next"><svg width="20" height="24"><path d="M4 3v18l15-9zM0 8h3v8H0z" fill="#555"/></svg></button>
        <button aria-label="Last"><svg width="20" height="24"><path d="M15 3h3v18h-3zM0 3v18l14-9z" fill="#555"/></svg></button>
      </div>
      <ol class="features">
        <li><svg><use href="#move"/></svg></li>
        <li><svg><use href="#move"/></svg></li>
        <li><svg><use href="#sketch"/></svg></li>
        <li><svg><use href="#sketch"/></svg></li>
        <li><svg><use href="#sketch"/></svg></li>
        <li><svg><use href="#sketch"/></svg></li>
        <li><svg><use href="#copy"/></svg></li>
        <li><svg><use href="#move"/></svg></li>
        <li><svg><use href="#sketch"/></svg></li>
        <li><svg><use href="#extrude"/></svg></li>
        <li><svg><use href="#move"/></svg></li>
        <li><svg><use href="#move"/></svg></li>
        <li><svg><use href="#plane"/></svg></li>
        <li><svg><use href="#sketch"/></svg></li>
        <li><svg><use href="#extrude"/></svg></li>
        <li><svg><use href="#move"/></svg></li>
        <li><svg><use href="#move"/></svg></li>
        <li><svg><use href="#move"/></svg></li>
        <li><svg><use href="#move"/></svg></li>
        <li><svg><use href="#move"/></svg></li>
        <li><svg><use href="#move"/></svg></li>
        <li><svg><use href="#sketch"/></svg></li>
        <li><svg><use href="#sketch"/></svg></li>
        <li><svg><use href="#sketch"/></svg></li>
        <li><svg><use href="#combine"/></svg></li>
        <li><svg><use href="#circular"/></svg></li>
        <li><svg><use href="#sketch"/></svg></li>
        <li><svg><use href="#circular"/></svg></li>
        <li><svg><use href="#move"/></svg></li>
        <li><svg><use href="#sketch"/></svg></li>
        <li><svg><use href="#sketch"/></svg></li>
        <li><svg><use href="#combine"/></svg></li>
        <li><svg><use href="#circular"/></svg></li>
        <li><svg><use href="#component"/></svg></li>
        <li><svg><use href="#copy"/></svg></li>
        <li><svg><use href="#move"/></svg></li>
        <li><svg><use href="#component"/></svg></li>
        <li><svg><use href="#move"/></svg></li>
        <li><svg><use href="#move"/></svg></li>
        <li><svg><use href="#move"/></svg></li>
        <li><svg><use href="#move"/></svg></li>
        <li><svg><use href="#move"/></svg></li>
        <li><svg><use href="#move"/></svg></li>
        <li class="current"><svg><use href="#form"/></svg></li>
        <li class="rolled"><svg><use href="#sketch"/></svg></li>
      </ol>
      <button class="prefs" aria-label="Timeline settings"><svg width="24" height="24"><use href="#gear"/></svg></button>
    </footer>
  </body>
</html>
```
FILE: styles.css
```css
:root {
  --bg: #f1f1f1;
  --bar: #cbcbcb;
  --line: #c8c8c8;
  --text: #3c3c3c;
  --blue: #1592c9;
}

* {
  box-sizing: border-box;
}

body {
  margin: 0;
  height: 100vh;
  display: flex;
  flex-direction: column;
  overflow: hidden;
  background: var(--bg);
  color: var(--text);
  font: 16px/20px "Liberation Sans", Arial, sans-serif;
}

button,
input,
select {
  font: inherit;
  color: inherit;
  margin: 0;
  padding: 0;
  border: 0;
  background: none;
}

h1,
h2 {
  margin: 0;
  font-size: 16px;
  font-weight: normal;
}

svg {
  display: block;
  flex: none;
}

.defs {
  position: absolute;
  width: 0;
  height: 0;
}

.caret {
  display: inline-block;
  border: 4px solid transparent;
  border-top: 7px solid #333;
  border-bottom: 0;
}

/* title bar */

.titlebar {
  flex: none;
  height: 34px;
  display: flex;
  align-items: center;
  gap: 9px;
  padding-left: 3px;
  background: linear-gradient(90deg, #f1f3fa, #eef3f9);
  color: #000;
}

.titlebar h1 {
  flex: 1;
  font-family: "Open Sans", "Noto Sans", sans-serif;
  font-size: 17px;
}

.logo-f,
.logo-fus {
  fill: #fff;
  font: bold 14px "Liberation Sans", sans-serif;
  text-anchor: middle;
}

.logo-fus {
  font-size: 6px;
}

.window-buttons {
  display: flex;
}

.window-buttons button {
  width: 70px;
  display: flex;
  justify-content: center;
}

/* document tabs */

.tabbar {
  flex: none;
  height: 48px;
  display: flex;
  align-items: stretch;
  padding-top: 6px;
  background: var(--bar);
}

.quick {
  display: flex;
  align-items: center;
  gap: 28px;
  width: 290px;
  padding: 0 10px 6px 13px;
}

.quick button {
  display: flex;
  align-items: center;
  gap: 10px;
}

.quick .redo {
  margin-left: -10px;
  opacity: .7;
}

.tab {
  display: flex;
  align-items: center;
  justify-content: center;
  border-radius: 6px 6px 0 0;
  background: #bababa;
}

.home {
  width: 58px;
  margin-right: 6px;
  padding-top: 4px;
}

.doc {
  flex: 1;
  gap: 6px;
  padding-left: 134px;
  background: var(--bg);
  font-size: 18px;
}

.doc > svg {
  margin-left: auto;
}

.doc > svg,
.doc span {
  margin-top: 4px;
}

.doc span {
  margin-right: auto;
}

.tab-close {
  align-self: flex-start;
  margin: 1px 5px 0 118px;
  width: 23px;
  height: 28px;
  display: flex;
  align-items: flex-end;
  justify-content: center;
  padding-bottom: 1px;
  background: #fff;
  border: 1px solid #ccc;
  border-radius: 4px;
}

.add {
  width: 42px;
  margin-left: 6px;
}

.status {
  display: flex;
  align-items: center;
  gap: 25px;
  padding: 0 20px 8px 17px;
  font-size: 18px;
}

.jobs {
  display: flex;
  align-items: center;
  gap: 6px;
  width: 50px;
}

.avatar {
  margin-left: 6px;
}

/* ribbon */

.ribbon {
  flex: none;
  height: 123px;
  display: flex;
  border-bottom: 1px solid #d0d0d0;
}

.workspace {
  flex: none;
  width: 165px;
  height: 91px;
  margin: 16px 8px 0 17px;
  border: 2px solid #d0d0d0;
  border-radius: 8px;
  font-weight: bold;
}

.workspace .caret {
  margin-left: 2px;
}

.ribbon-main {
  flex: 1;
  min-width: 0;
}

.ribbon-tabs {
  display: flex;
  gap: 36px;
  padding-left: 17px;
}

.ribbon-tabs a {
  height: 35px;
  padding: 7px 18px 0;
  color: var(--text);
  text-decoration: none;
}

.ribbon-tabs .active {
  color: var(--blue);
  border-bottom: 4px solid var(--blue);
}

.groups {
  display: flex;
  margin-top: 5px;
}

.group {
  flex: none;
  height: 76px;
  padding: 0 16px;
  border-right: 1px solid #d0d0d0;
  display: flex;
  flex-direction: column;
  align-items: center;
  justify-content: space-between;
}

.group.wide {
  padding: 0 21px;
}

.group.configure {
  padding: 0 23px;
}

.group:last-child {
  border: 0;
}

.group button {
  display: flex;
  align-items: center;
  gap: 5px;
  line-height: 18px;
}

.tools {
  display: flex;
  gap: 16px;
}

.tools svg {
  width: 48px;
  height: 48px;
}

/* canvas */

.viewport {
  flex: 1;
  min-height: 0;
  position: relative;
  overflow: hidden;
}

.scene {
  position: absolute;
  width: 100%;
  height: 100%;
}

.browser {
  position: relative;
  width: 455px;
  height: 100%;
  padding: 11px 0 6px 6px;
  display: flex;
  flex-direction: column;
}

.panel-head {
  flex: none;
  height: 37px;
  display: flex;
  align-items: center;
  gap: 14px;
  padding: 0 16px 0 7px;
  background: var(--bg);
  border: 1px solid var(--line);
  border-bottom-width: 2px;
  color: #666;
}

.panel-head h2 {
  flex: 1;
}

.comments {
  padding-left: 38px;
  border-top: 0;
  border-left: 0;
}

.tree-wrap {
  flex: 1;
  min-height: 0;
  display: flex;
  padding: 5px 0 0 6px;
}

.tree-scroll {
  flex: none;
  width: 9px;
  height: 714px;
  margin-top: 3px;
  border-radius: 4px;
  background: rgba(140, 140, 140, .55);
}

.tree-scroll span {
  display: block;
  height: 309px;
  border-radius: 4px;
  background: rgba(60, 60, 60, .4);
}

.tree {
  list-style: none;
  margin: 0;
  padding: 0 0 0 12px;
}

.tree li {
  height: 36px;
  display: flex;
  align-items: center;
}

.tree .l1 {
  padding-left: 27px;
}

.tree .l2 {
  padding-left: 54px;
}

.tree .leaf {
  padding-left: 81px;
}

.tw {
  width: 12px;
  height: 15px;
  margin-right: 15px;
}

.node {
  height: 28px;
  display: flex;
  align-items: center;
  padding: 0 17px 0 4px;
  background: #f0f0f0;
  white-space: nowrap;
}

.eye {
  width: 24px;
  height: 18px;
  margin-right: 14px;
}

.kind {
  width: 24px;
  height: 22px;
  margin-right: 21px;
}

.gear {
  width: 20px;
  height: 20px;
  margin-right: 20px;
  color: #888;
}

.root .eye {
  margin-right: 9px;
}

.root b {
  height: 24px;
  display: flex;
  align-items: center;
  gap: 22px;
  padding: 0 19px 0 6px;
  background: #999;
  color: #fff;
}

.root input {
  appearance: none;
  width: 20px;
  height: 20px;
  margin-left: 7px;
  border: 2px solid #555;
  border-radius: 50%;
  background: radial-gradient(#333 0 3px, #cdd3df 4px, #f4f6fa 8px);
}

.origin {
  position: relative;
}

.origin::after {
  content: "";
  position: absolute;
  left: 37px;
  right: 4px;
  bottom: 1px;
  height: 5px;
  background: repeating-linear-gradient(130deg, #7d8fb5 0 3px, transparent 3px 7px);
}

.snap {
  position: absolute;
  left: 1042px;
  top: 330px;
  padding: 2px 6px 3px;
  background: #f0f0f0;
  border: 1px solid #ddd;
  border-bottom-color: #777;
  color: #222;
  font-family: "Open Sans", "Noto Sans", sans-serif;
}

.manip {
  position: absolute;
  left: 1044px;
  top: 497px;
  height: 32px;
  display: flex;
  align-items: center;
  padding: 0 12px 0 6px;
  background: #f0f0f0;
}

.manip input {
  width: 106px;
  height: 29px;
  margin: 0 16px 0 9px;
  border: 1px solid #bbb;
  outline: 1px solid #e4e4e4;
  background: #fff;
  color: #111;
  text-align: center;
}

.viewcube {
  position: absolute;
  right: 24px;
  top: 27px;
}

.face {
  font: bold 12px "Open Sans", sans-serif;
  fill: #8d9096;
  text-anchor: middle;
}

.axis {
  font: bold 14px "Open Sans", sans-serif;
}

.axis.x { fill: #f08080; }
.axis.y { fill: #9be89b; }
.axis.z { fill: #9a97ee; }

/* section analysis */

.section-panel {
  position: absolute;
  right: 7px;
  top: 131px;
  width: 374px;
  background: var(--bg);
  border: 1px solid var(--line);
  border-bottom-width: 2px;
}

.section-head {
  height: 36px;
  display: flex;
  align-items: center;
  gap: 7px;
  padding: 0 5px 0 17px;
  border-bottom: 2px solid var(--line);
  color: #666;
}

.section-head h2 {
  flex: 1;
}

.fields {
  display: grid;
  grid-template-columns: 121px 184px;
  grid-auto-rows: 38px;
  row-gap: 7px;
  align-items: center;
  padding: 4px 0 4px 19px;
}

.fields input[type=text],
.cut button:first-child,
.fields select {
  width: 100%;
  height: 38px;
  padding: 0 4px;
  background: #fff;
  border: 1px solid #bfbfbf;
}

.cut {
  display: flex;
  align-items: center;
  gap: 17px;
}

.cut button:first-child {
  width: 116px;
  display: flex;
  align-items: center;
  padding: 0 8px 0 10px;
  gap: 6px;
  white-space: nowrap;
}

.flip {
  width: 34px;
  display: flex;
  justify-content: center;
}

.select {
  position: relative;
}

.fields select {
  appearance: none;
  padding: 0 10px;
}

.select::after {
  content: "";
  position: absolute;
  right: 7px;
  top: 16px;
  border: 5px solid transparent;
  border-top: 6px solid #333;
  border-bottom: 0;
}

.fields input[type=checkbox] {
  appearance: none;
  width: 20px;
  height: 20px;
  margin-left: 7px;
  border: 2px solid #444;
  border-radius: 4px;
  background: linear-gradient(#bbb, #eee);
}

.fields input[type=checkbox]::after {
  content: "";
  display: block;
  width: 5px;
  height: 11px;
  margin: 0 0 0 5px;
  border: solid #000;
  border-width: 0 2px 2px 0;
  transform: rotate(38deg);
}

.section-foot {
  height: 54px;
  display: flex;
  align-items: center;
  gap: 15px;
  padding: 0 16px 0 12px;
  border-top: 2px solid var(--line);
  font-size: 17px;
}

.section-foot svg {
  margin-right: auto;
}

.section-foot button {
  width: 90px;
  height: 29px;
  border: 1px solid #aaa;
  background: #e7e7e7;
  color: #666;
}

/* navigation bar */

.navbar {
  position: absolute;
  left: 50%;
  bottom: 9px;
  transform: translateX(-50%);
  height: 36px;
  display: flex;
  align-items: center;
  gap: 13px;
  padding: 0 5px;
  background: #f0f0f0;
}

.navbar button {
  display: flex;
  align-items: center;
  gap: 4px;
}

.navbar .caret {
  border-width: 6px 4px 0;
}

.plane-name {
  position: absolute;
  right: 25px;
  bottom: 14px;
  color: #333;
  font-weight: bold;
}

/* timeline */

.timeline {
  flex: none;
  height: 75px;
  position: relative;
  display: flex;
  align-items: flex-start;
  border-top: 1px solid #ccc;
}

.scroll-thumb {
  position: absolute;
  right: 38px;
  top: 0;
  width: 144px;
  height: 9px;
  border-radius: 0 0 4px 4px;
  background: #c8c8c8;
}

.playback {
  display: flex;
  gap: 17px;
  padding: 29px 0 0 17px;
}

.features {
  position: relative;
  display: flex;
  list-style: none;
  margin: 23px 0 0 28px;
  padding: 0;
  border-bottom: 3px solid #c8c8c8;
}

/* dashed ends of the track */
.features::before,
.features::after {
  content: "";
  position: absolute;
  bottom: -3px;
  width: 14px;
  height: 3px;
  background: repeating-linear-gradient(90deg, #c8c8c8 0 4px, transparent 4px 7px);
}

.features::before {
  right: 100%;
}

.features::after {
  left: 100%;
}

.features li {
  flex: none;
  width: 36px;
  height: 37px;
  padding-left: 6px;
  position: relative;
}

.features svg {
  width: 24px;
  height: 24px;
}

.features li::after {
  content: "";
  display: block;
  width: 3px;
  height: 8px;
  margin: 5px 0 0 11px;
  background: #c8c8c8;
}

.features .rolled svg {
  opacity: .3;
}

.features .current::before {
  content: "";
  position: absolute;
  right: -9px;
  top: -9px;
  width: 18px;
  height: 49px;
  background: #555;
  clip-path: polygon(0 0, 100% 0, 100% 8px, 11px 15px, 11px 100%, 8px 100%, 8px 15px, 0 8px);
}

.prefs {
  margin: 29px 20px 0 auto;
  color: #777;
}
```
